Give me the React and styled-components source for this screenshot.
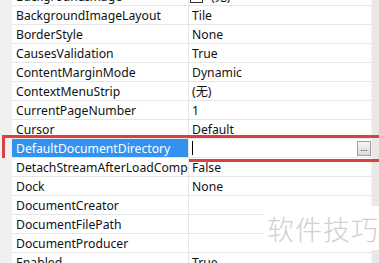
import React from 'react';
import styled, { createGlobalStyle } from 'styled-components';

const GlobalStyle = createGlobalStyle`
  html, body {
    margin: 0;
    padding: 0;
    background: #ffffff;
    overflow: hidden;
  }
  body {
    font-family: "Noto Sans", "Noto Sans CJK SC", sans-serif;
  }
`;

const Frame = styled.div`
  position: relative;
  width: 379px;
  height: 263px;
  overflow: hidden;
  display: flex;
  background: #ffffff;
`;

const Grid = styled.div`
  flex: 1;
  display: flex;
  flex-direction: column;
  margin-top: -13px;
`;

const Scrollbar = styled.div`
  width: 7px;
  background: #e8e8e8;
  border-left: 1px solid #f2f2f2;
`;

const Row = styled.div`
  position: relative;
  display: grid;
  grid-template-columns: 12px 177px 1fr;
  height: 19px;
  flex-shrink: 0;

  ${props => props.marked && `
    &::after {
      content: '';
      position: absolute;
      left: 2px;
      right: -12px;
      top: -4px;
      bottom: -4px;
      border: 3px solid #d8413f;
      pointer-events: none;
    }
  `}
`;

const Gutter = styled.div`
  background: #f0f0f0;
`;

const NameCell = styled.div`
  display: flex;
  align-items: center;
  padding-left: 4px;
  border-bottom: 1px solid #e6e6e6;
  border-right: 1px solid #e6e6e6;
  background: ${props => (props.selected ? '#3392f0' : '#ffffff')};
  color: ${props => (props.selected ? '#ffffff' : '#111111')};
  font-size: 12.2px;
  white-space: nowrap;
  overflow: hidden;
`;

const ValueCell = styled.div`
  display: flex;
  align-items: center;
  padding-left: 3px;
  padding-right: 0;
  border-bottom: 1px solid #e6e6e6;
  color: #111111;
  font-size: 12.2px;
  white-space: nowrap;
  overflow: hidden;
`;

const Swatch = styled.span`
  display: inline-block;
  width: 11px;
  height: 11px;
  border: 1px solid #333;
  margin-left: -2px;
  margin-right: 8px;
  background: #fff;
`;

const Caret = styled.span`
  display: inline-block;
  width: 1px;
  height: 14px;
  background: #000;
`;

const Spacer = styled.span`
  flex: 1;
`;

const EllipsisButton = styled.span`
  display: flex;
  align-items: flex-end;
  justify-content: center;
  width: 14px;
  height: 15px;
  border: 1px solid #a0a0a0;
  background: linear-gradient(#f6f6f6, #dadada);
  font-size: 9px;
  line-height: 9px;
  color: #222;
  padding-bottom: 3px;
  box-sizing: border-box;
`;

const Watermark = styled.div`
  position: absolute;
  left: 264px;
  top: 206px;
  width: 115px;
  height: 44px;
  background: #ffffff;
  display: flex;
  align-items: center;
  justify-content: center;
  padding-left: 3px;
  box-sizing: border-box;
  font-family: "Noto Sans CJK SC", sans-serif;
  font-weight: 300;
  font-size: 27px;
  letter-spacing: 1px;
  color: #d0d0d0;
`;

const rows = [
  { name: 'BackgroundImage', value: '(无)', swatch: true },
  { name: 'BackgroundImageLayout', value: 'Tile' },
  { name: 'BorderStyle', value: 'None' },
  { name: 'CausesValidation', value: 'True' },
  { name: 'ContentMarginMode', value: 'Dynamic' },
  { name: 'ContextMenuStrip', value: '(无)' },
  { name: 'CurrentPageNumber', value: '1' },
  { name: 'Cursor', value: 'Default' },
  { name: 'DefaultDocumentDirectory', value: '', selected: true },
  { name: 'DetachStreamAfterLoadCompleted', value: 'False' },
  { name: 'Dock', value: 'None' },
  { name: 'DocumentCreator', value: '' },
  { name: 'DocumentFilePath', value: '' },
  { name: 'DocumentProducer', value: '' },
  { name: 'Enabled', value: 'True' },
];

export default function App() {
  return (
    <>
      <GlobalStyle />
      <Frame>
        <Grid>
          {rows.map(row => (
            <Row key={row.name} marked={row.selected}>
              <Gutter />
              <NameCell selected={row.selected}>{row.name}</NameCell>
              <ValueCell>
                {row.swatch && <Swatch />}
                {row.selected ? (
                  <>
                    <Caret />
                    <Spacer />
                    <EllipsisButton>...</EllipsisButton>
                  </>
                ) : (
                  row.value
                )}
              </ValueCell>
            </Row>
          ))}
        </Grid>
        <Scrollbar />
        <Watermark>软件技巧</Watermark>
      </Frame>
    </>
  );
}
